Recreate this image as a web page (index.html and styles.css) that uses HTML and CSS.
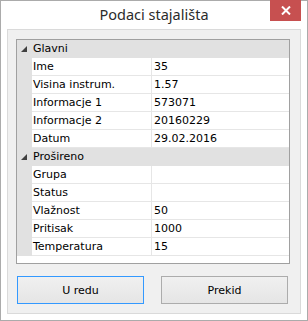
FILE: index.html
```html
<!DOCTYPE html>
<html lang="hr">

<head>
    <meta charset="UTF-8">
    <meta name="viewport" content="width=device-width, initial-scale=1.0">
    <title>Podaci stajališta</title>
    <link rel="stylesheet" href="styles.css">
</head>

<body>
    <div class="window">
        <div class="titlebar">
            <span class="title">Podaci stajališta</span>
            <button class="close-btn" type="button" aria-label="Zatvori">
                <svg width="10" height="9" viewBox="0 0 10 9">
                    <path d="M1 0.5 L9 8.5 M9 0.5 L1 8.5" stroke="#fff" stroke-width="2" fill="none" />
                </svg>
            </button>
        </div>

        <div class="frame">
            <div class="client">
                <div class="prop-grid">
                    <div class="row category">
                        <span class="gutter">
                            <svg class="arrow" width="6" height="6" viewBox="0 0 6 6">
                                <polygon points="6,0 6,6 0,6" fill="#404040" />
                            </svg>
                        </span>
                        <span class="cat-name">Glavni</span>
                    </div>
                    <div class="row"><span class="gutter"></span><span class="name">Ime</span><span class="value">35</span></div>
                    <div class="row"><span class="gutter"></span><span class="name">Visina instrum.</span><span class="value">1.57</span></div>
                    <div class="row"><span class="gutter"></span><span class="name">Informacje 1</span><span class="value">573071</span></div>
                    <div class="row"><span class="gutter"></span><span class="name">Informacje 2</span><span class="value">20160229</span></div>
                    <div class="row"><span class="gutter"></span><span class="name">Datum</span><span class="value">29.02.2016</span></div>

                    <div class="row category">
                        <span class="gutter">
                            <svg class="arrow" width="6" height="6" viewBox="0 0 6 6">
                                <polygon points="6,0 6,6 0,6" fill="#404040" />
                            </svg>
                        </span>
                        <span class="cat-name">Prošireno</span>
                    </div>
                    <div class="row"><span class="gutter"></span><span class="name">Grupa</span><span class="value"></span></div>
                    <div class="row"><span class="gutter"></span><span class="name">Status</span><span class="value"></span></div>
                    <div class="row"><span class="gutter"></span><span class="name">Vlažnost</span><span class="value">50</span></div>
                    <div class="row"><span class="gutter"></span><span class="name">Pritisak</span><span class="value">1000</span></div>
                    <div class="row"><span class="gutter"></span><span class="name">Temperatura</span><span class="value">15</span></div>
                </div>

                <div class="buttons">
                    <button type="button" class="btn btn-default">U redu</button>
                    <button type="button" class="btn">Prekid</button>
                </div>
            </div>
        </div>
    </div>
</body>

</html>
```

FILE: styles.css
```css
/* General Reset */
* {
    margin: 0;
    padding: 0;
    box-sizing: border-box;
}

body {
    background: #fff;
    font-family: 'DejaVu Sans', sans-serif;
}

.window {
    width: 308px;
    height: 321px;
    border: 1px solid #ababab;
    background: #fff;
    display: flex;
    flex-direction: column;
    position: relative;
}

/* Title bar */
.titlebar {
    height: 28px;
    display: flex;
    justify-content: center;
    align-items: center;
}

.title {
    font-family: 'Noto Sans', sans-serif;
    font-size: 14.5px;
    color: #2b2b2b;
    margin-top: -2px;
}

.close-btn {
    position: absolute;
    top: -1px;
    right: 6px;
    width: 31px;
    height: 21px;
    border: none;
    background: #c75050;
    display: flex;
    justify-content: center;
    align-items: center;
}

/* Frame around the client area */
.frame {
    flex: 1;
    padding: 0 6px 6px 6px;
    display: flex;
}

.client {
    flex: 1;
    border: 1px solid #dadada;
    background: #f0f0f0;
    padding: 9px 10px 0 8px;
    display: flex;
    flex-direction: column;
}

/* Property grid */
.prop-grid {
    height: 225px;
    border: 1px solid #a0a0a0;
    background: #fff;
    font-size: 11px;
    color: #000;
}

.row {
    height: 18px;
    display: grid;
    grid-template-columns: 15px 120px 1fr;
    align-items: stretch;
}

.row .name,
.row .value {
    border-bottom: 1px solid #e6e6e6;
    line-height: 17px;
    white-space: nowrap;
}

.row .name {
    border-right: 1px solid #e6e6e6;
    padding-left: 1px;
}

.row .value {
    padding-left: 2px;
}

.gutter {
    background: #e1e1e1;
    display: flex;
    align-items: center;
    padding-left: 4px;
}

.category {
    background: #e1e1e1;
}

.cat-name {
    grid-column: 2 / 4;
    line-height: 18px;
    padding-left: 1px;
}

/* Buttons */
.buttons {
    display: flex;
    gap: 17px;
    margin-top: 12px;
    padding: 0 2px 0 1px;
}

.btn {
    flex: 1;
    height: 28px;
    border: 1px solid #acacac;
    background: linear-gradient(#f0f0f0, #e5e5e5);
    font-family: 'DejaVu Sans', sans-serif;
    font-size: 11px;
    color: #000;
}

.btn-default {
    border-color: #3399ff;
}
```
